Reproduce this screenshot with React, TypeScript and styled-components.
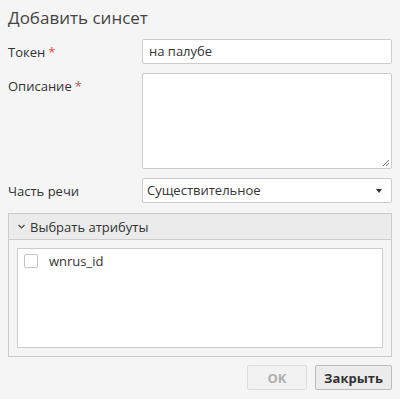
import React from "react";
import styled, { createGlobalStyle } from "styled-components";

const Global = createGlobalStyle`
  html, body { margin: 0; padding: 0; background: #f5f5f5; }
  body { font-family: "Open Sans", "Liberation Sans", sans-serif; color: #333; font-size: 13px; }
  * { box-sizing: border-box; }
`;

const Dialog = styled.div`
  width: 400px;
  height: 399px;
  background: #f5f5f5;
  padding: 0 8px 9px 8px;
  display: flex;
  flex-direction: column;
`;

const Title = styled.h1`
  margin: 0;
  height: 39px;
  padding-top: 6px;
  font-size: 17px;
  font-weight: 400;
  color: #444;
`;

const Form = styled.div`
  display: flex;
  flex-direction: column;
  gap: 9px;
`;

const Row = styled.div`
  display: grid;
  grid-template-columns: 134px 1fr;
  align-items: start;
`;

const Label = styled.label`
  padding-top: 4px;
  font-size: 13px;
  color: #333;
`;

const Req = styled.span`
  color: #e8464a;
  margin-left: 3px;
`;

const Input = styled.div`
  height: 25px;
  background: #fff;
  border: 1px solid #ccc;
  border-radius: 2px;
  padding: 3px 6px;
  font-size: 13px;
  line-height: 17px;
`;

const TextArea = styled.div`
  position: relative;
  height: 96px;
  background: #fff;
  border: 1px solid #ccc;
  border-radius: 2px;
`;

const Grip = styled.svg`
  position: absolute;
  right: 1px;
  bottom: 1px;
`;

const Select = styled.div`
  height: 25px;
  background: #fff;
  border: 1px solid #ccc;
  border-radius: 2px;
  padding: 3px 4px;
  display: flex;
  align-items: center;
  justify-content: space-between;
  font-size: 13px;
  line-height: 17px;
`;

const Caret = styled.span`
  width: 0;
  height: 0;
  border-left: 3.5px solid transparent;
  border-right: 3.5px solid transparent;
  border-top: 4px solid #333;
  margin-right: 5px;
`;

const Panel = styled.div`
  margin-top: 1px;
  height: 144px;
  border: 1px solid #ccc;
  display: flex;
  flex-direction: column;
  background: #f5f5f5;
`;

const PanelHead = styled.div`
  height: 26px;
  background: #ebebeb;
  border-bottom: 1px solid #ccc;
  display: flex;
  align-items: center;
  padding-left: 8px;
  gap: 4px;
  font-size: 13px;
`;

const PanelBody = styled.div`
  flex: 1;
  padding: 8px;
  display: flex;
`;

const List = styled.div`
  flex: 1;
  background: #fff;
  border: 1px solid #ccc;
  padding: 4px 6px;
`;

const Item = styled.div`
  display: flex;
  align-items: center;
  gap: 11px;
  font-size: 13px;
  height: 16px;
`;

const Check = styled.span`
  width: 14px;
  height: 14px;
  border: 1px solid #c4c4c4;
  border-radius: 2px;
  background: #fff;
`;

const Footer = styled.div`
  margin-top: auto;
  display: flex;
  justify-content: flex-end;
  gap: 8px;
`;

const Button = styled.button<{ $disabled?: boolean; $w: number }>`
  width: ${(p) => p.$w}px;
  height: 25px;
  padding: 0;
  font-family: inherit;
  font-size: 13px;
  font-weight: 700;
  border-radius: 2px;
  border: 1px solid ${(p) => (p.$disabled ? "#ddd" : "#bbb")};
  background: ${(p) => (p.$disabled ? "#f2f2f2" : "#ececec")};
  color: ${(p) => (p.$disabled ? "#b0b0b0" : "#333")};
`;

export default function App() {
  return (
    <>
      <Global />
      <Dialog>
        <Title>Добавить синсет</Title>
        <Form>
          <Row>
            <Label>
              Токен<Req>*</Req>
            </Label>
            <Input>на палубе</Input>
          </Row>
          <Row>
            <Label>
              Описание<Req>*</Req>
            </Label>
            <TextArea>
              <Grip width="9" height="9" viewBox="0 0 9 9">
                <path d="M8 2 L2 8 M8 5 L5 8" stroke="#777" strokeWidth="1" />
              </Grip>
            </TextArea>
          </Row>
          <Row>
            <Label>Часть речи</Label>
            <Select>
              <span>Существительное</span>
              <Caret />
            </Select>
          </Row>
          <Panel>
            <PanelHead>
              <svg width="9" height="9" viewBox="0 0 9 9">
                <path d="M1.5 3 L4.5 6 L7.5 3" stroke="#444" strokeWidth="1.2" fill="none" />
              </svg>
              Выбрать атрибуты
            </PanelHead>
            <PanelBody>
              <List>
                <Item>
                  <Check />
                  wnrus_id
                </Item>
              </List>
            </PanelBody>
          </Panel>
        </Form>
        <Footer>
          <Button $disabled $w={60}>OK</Button>
          <Button $w={77}>Закрыть</Button>
        </Footer>
      </Dialog>
    </>
  );
}
